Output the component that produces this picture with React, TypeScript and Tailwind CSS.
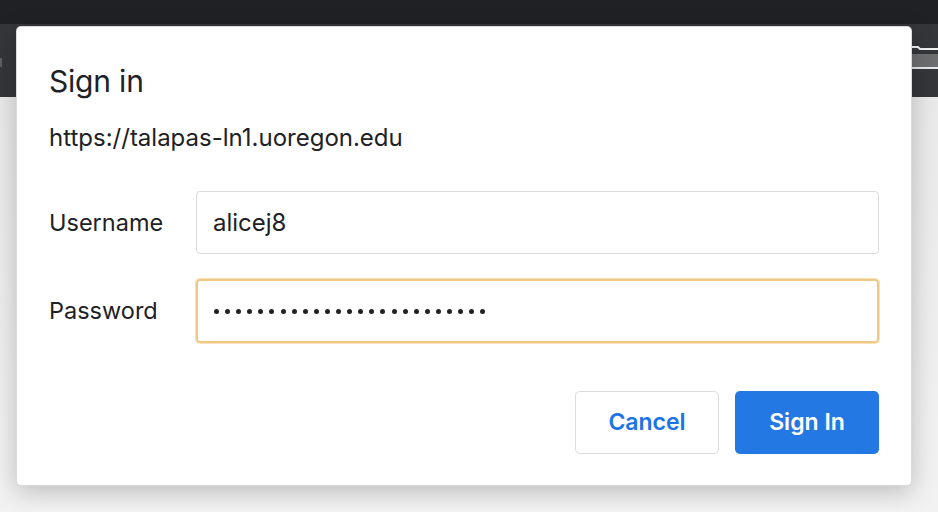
import type { FC } from 'react';

const font = { fontFamily: 'Inter, "Noto Sans", sans-serif' };

const Dots: FC<{ count: number }> = ({ count }) => (
    <div className="flex items-center gap-[6.1px]">
        {Array.from({ length: count }).map((_, i) => (
            <span key={i} className="block w-[5px] h-[5px] rounded-full bg-[#202124]" />
        ))}
    </div>
);

const App: FC = () => {
    return (
        <div className="relative w-[938px] h-[512px] overflow-hidden bg-[#f0f0f0]" style={font}>
            {/* browser chrome behind the dialog */}
            <div className="h-[24px] bg-[#202124]" />
            <div className="h-[73px] bg-[#35363a] flex items-start justify-between">
                <span className="block mt-[34px] w-[2px] h-[9px] bg-[#5f6065]" />
                <svg width="26" height="26" viewBox="0 0 26 26" className="mt-[22px]">
                    <path d="M0 1 H6 L8 3 H26" fill="none" stroke="#f1f1f1" strokeWidth="2" />
                    <rect x="0" y="8" width="26" height="13" fill="#6e6e70" />
                    <rect x="0" y="21" width="26" height="2" fill="#e8e8e8" />
                </svg>
            </div>
            <div className="h-[415px] bg-gradient-to-b from-[#e9e9e9] to-[#f2f2f2]" />

            {/* sign-in dialog */}
            <div className="absolute left-[16px] top-[26px] w-[896px] h-[460px] bg-white rounded-[5px] border border-black/15 shadow-[0_6px_24px_rgba(0,0,0,0.22)] px-[32px] pt-[36px] text-[#202124]">
                <h1 className="text-[30px] leading-[36px] font-normal tracking-[-0.2px]">Sign in</h1>
                <p className="mt-[23px] text-[24px] leading-[32px]">https://talapas-ln1.uoregon.edu</p>

                <div className="mt-[37px] flex items-center">
                    <label className="w-[147px] text-[23.5px]">Username</label>
                    <div className="flex-1 h-[63px] border border-[#dadce0] rounded-[4px] flex items-center pl-[16px] text-[24px]">
                        alicej8
                    </div>
                </div>

                <div className="mt-[25px] flex items-center">
                    <label className="w-[147px] text-[23.5px]">Password</label>
                    <div className="flex-1 h-[64px] border-2 border-[#efc983] shadow-[0_0_0_1px_#f8e2bb] rounded-[4px] flex items-center pl-[16px]">
                        <Dots count={25} />
                    </div>
                </div>

                <div className="mt-[48px] flex justify-end gap-[16px]">
                    <button className="w-[144px] h-[63px] rounded-[5px] border border-[#dadce0] bg-white text-[#1a73e8] text-[23px] font-semibold">
                        Cancel
                    </button>
                    <button className="w-[144px] h-[63px] rounded-[5px] bg-[#2478e4] text-white text-[23px] font-semibold">
                        Sign In
                    </button>
                </div>
            </div>
        </div>
    );
};

export default App;
